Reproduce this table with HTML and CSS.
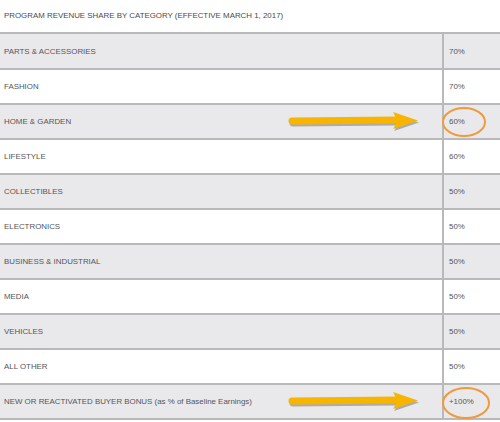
FILE: index.html
```html
<!DOCTYPE html>
<html>
<head>
<meta charset="utf-8">
<link rel="stylesheet" href="styles.css">
</head>
<body>
<div class="title">PROGRAM REVENUE SHARE BY CATEGORY (EFFECTIVE MARCH 1, 2017)</div>
<table class="share">
  <tr class="gray"><td class="cat">PARTS &amp; ACCESSORIES</td><td class="val">70%</td></tr>
  <tr><td class="cat">FASHION</td><td class="val">70%</td></tr>
  <tr class="gray"><td class="cat">HOME &amp; GARDEN<svg class="arrow" width="136" height="22" viewBox="0 0 136 22"><g transform="translate(1,2)"><path d="M4 9 L108 8" stroke="#7a7a7a" stroke-opacity="0.55" stroke-width="7" stroke-linecap="round"/><path d="M105 0 L130 8.5 L105 17 L110 8.5 Z" fill="#7a7a7a" fill-opacity="0.55"/></g><path d="M4 9 L108 8" stroke="#f7b500" stroke-width="7" stroke-linecap="round"/><path d="M105 0 L130 8.5 L105 17 L110 8.5 Z" fill="#f7b500"/></svg></td><td class="val">60%<svg class="ring" width="48" height="34" viewBox="0 0 48 34"><ellipse cx="23" cy="16" rx="21" ry="14" fill="none" stroke="#f09a3c" stroke-width="2"/></svg></td></tr>
  <tr><td class="cat">LIFESTYLE</td><td class="val">60%</td></tr>
  <tr class="gray"><td class="cat">COLLECTIBLES</td><td class="val">50%</td></tr>
  <tr><td class="cat">ELECTRONICS</td><td class="val">50%</td></tr>
  <tr class="gray"><td class="cat">BUSINESS &amp; INDUSTRIAL</td><td class="val">50%</td></tr>
  <tr><td class="cat">MEDIA</td><td class="val">50%</td></tr>
  <tr class="gray"><td class="cat">VEHICLES</td><td class="val">50%</td></tr>
  <tr><td class="cat">ALL OTHER</td><td class="val">50%</td></tr>
  <tr class="gray"><td class="cat">NEW OR REACTIVATED BUYER BONUS (as % of Baseline Earnings)<svg class="arrow" width="136" height="22" viewBox="0 0 136 22"><g transform="translate(1,2)"><path d="M4 9 L108 8" stroke="#7a7a7a" stroke-opacity="0.55" stroke-width="7" stroke-linecap="round"/><path d="M105 0 L130 8.5 L105 17 L110 8.5 Z" fill="#7a7a7a" fill-opacity="0.55"/></g><path d="M4 9 L108 8" stroke="#f7b500" stroke-width="7" stroke-linecap="round"/><path d="M105 0 L130 8.5 L105 17 L110 8.5 Z" fill="#f7b500"/></svg></td><td class="val">+100%<svg class="ring" width="52" height="36" viewBox="0 0 52 36"><ellipse cx="25" cy="17" rx="23" ry="15" fill="none" stroke="#f09a3c" stroke-width="2"/></svg></td></tr>
</table>
</body>
</html>
```
FILE: styles.css
```css
html, body {
  margin: 0;
  padding: 0;
  background: #ffffff;
}
body {
  width: 500px;
  height: 422px;
  overflow: hidden;
  font-family: "Liberation Sans", Arial, sans-serif;
  font-size: 7.9px;
  color: #555558;
}
.title {
  height: 34px;
  line-height: 31px;
  padding-left: 4px;
  border-bottom: 2px solid #b9b9bb;
  box-sizing: border-box;
  color: #4a4a4d;
}
.share {
  width: 500px;
  border-collapse: collapse;
  table-layout: fixed;
}
.share tr {
  height: 35px;
}
.share td {
  border-bottom: 2px solid #b9b9bb;
  padding: 0;
  vertical-align: middle;
  position: relative;
}
.share tr.gray td {
  background: #e9e9ec;
}
.cat {
  width: 443px;
  padding-left: 4px !important;
  box-sizing: border-box;
}
.val {
  border-left: 2px solid #b9b9bb;
  padding-left: 5px !important;
}
.arrow {
  position: absolute;
  left: 288px;
  top: 7px;
}
.ring {
  position: absolute;
  left: -3px;
  top: 1px;
}
```
